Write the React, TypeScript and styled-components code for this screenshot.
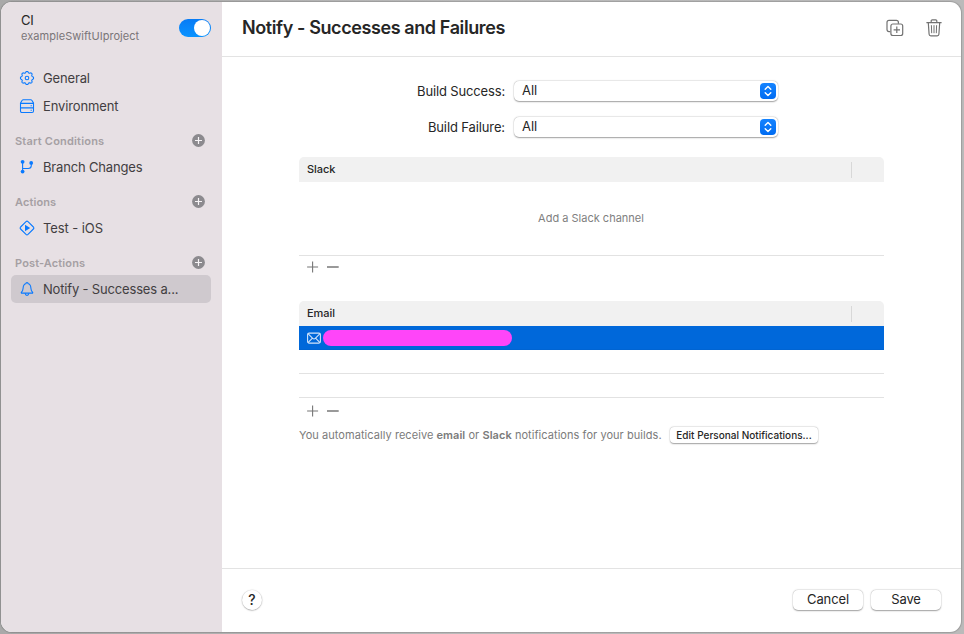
import React from "react";
import styled, { createGlobalStyle } from "styled-components";

const GlobalStyle = createGlobalStyle`
  * { box-sizing: border-box; }
  body {
    margin: 0;
    background: #b9b9b9;
    font-family: Inter, "Liberation Sans", sans-serif;
    font-size: 13px;
    color: #262626;
  }
  button { font-family: inherit; color: inherit; border: 0; padding: 0; background: none; }
  svg { display: block; flex: none; }
`;

const Desktop = styled.div`
  width: 964px;
  height: 634px;
  padding: 2px 3px 2px 1px;
  overflow: hidden;
  background: linear-gradient(90deg, #a9a9a9 0, #bdbdbd 50%, #bababa 100%);
`;
const Window = styled.div`
  display: flex;
  height: 630px;
  border-radius: 11px;
  overflow: hidden;
  background: #fff;
  box-shadow: 0 0 1px 1px rgba(0, 0, 0, 0.16);
`;

const Sidebar = styled.aside`
  width: 221px;
  flex: none;
  background: #e7e0e4;
`;
const Workflow = styled.div`
  display: flex;
  justify-content: space-between;
  height: 62px;
  padding: 10px 11px 0 20px;
`;
const WorkflowName = styled.div`
  font-size: 13px;
  line-height: 17px;
  letter-spacing: -0.2px;
`;
const ProjectName = styled.div`
  font-size: 11px;
  line-height: 15px;
  letter-spacing: 0.05px;
  color: #7a7578;
`;
const Toggle = styled.button`
  display: flex;
  justify-content: flex-end;
  width: 32px;
  height: 18px;
  margin-top: 7px;
  padding: 1px;
  border-radius: 9px;
  background: linear-gradient(#087bf5, #0a93ff);
`;
const Knob = styled.span`
  width: 16px;
  height: 16px;
  border-radius: 50%;
  background: #fff;
`;
const NavItem = styled.a<{ $selected?: boolean; $spacing: number }>`
  display: flex;
  align-items: center;
  gap: 8px;
  height: 28px;
  margin: 0 11px 0 10px;
  padding-left: 8px;
  border-radius: 5px;
  white-space: nowrap;
  color: #423e41;
  letter-spacing: ${(p) => p.$spacing}px;
  background: ${(p) => (p.$selected ? "#cfc9ce" : "transparent")};
`;
const SectionHeader = styled.div<{ $spacing: number }>`
  display: flex;
  align-items: center;
  justify-content: space-between;
  height: 33px;
  padding: 9px 17px 0 14px;
  font-size: 11px;
  font-weight: 600;
  letter-spacing: ${(p) => p.$spacing}px;
  color: #a59fa3;

  svg { margin-bottom: 2px; }
`;

const Main = styled.main`
  flex: 1;
  display: flex;
  flex-direction: column;
`;
const Header = styled.header`
  display: flex;
  align-items: center;
  height: 55px;
  padding: 0 18px 3px 20px;
  border-bottom: 1px solid #e3e3e3;
`;
const Title = styled.h1`
  flex: 1;
  margin: 0;
  font-size: 18px;
  line-height: 22px;
  font-weight: 600;
  letter-spacing: -0.4px;
`;
const HeaderActions = styled.div`
  display: flex;
  gap: 21px;
`;
const Content = styled.section`
  flex: 1;
  padding: 23px 0 0 77px;
`;
const Fields = styled.div`
  display: grid;
  row-gap: 14px;
  margin-bottom: 19px;
`;
const Field = styled.div`
  display: grid;
  grid-template-columns: 206px 264px;
  column-gap: 9px;
  align-items: center;
  height: 22px;
`;
const FieldLabel = styled.label<{ $spacing: number }>`
  text-align: right;
  letter-spacing: ${(p) => p.$spacing}px;
`;
const raised = `
  background: #fff;
  box-shadow: 0 0 0 0.5px rgba(0,0,0,.05), 0 0.5px 1.5px rgba(0,0,0,.36);
`;
const Select = styled.button`
  ${raised}
  display: flex;
  align-items: center;
  justify-content: space-between;
  height: 20px;
  padding: 0 2px 0 8px;
  border-radius: 5px;
  font-size: 13px;
`;
const SelectValue = styled.span`
  padding-bottom: 2px;
`;
const Stepper = styled.span`
  display: grid;
  place-items: center;
  width: 16px;
  height: 16px;
  border-radius: 4px;
  background: linear-gradient(#1483ff, #006cf2);
`;
const Table = styled.div<{ $gap: number }>`
  width: 585px;
  margin-bottom: ${(p) => p.$gap}px;
`;
const TableHead = styled.div`
  display: flex;
  align-items: center;
  justify-content: space-between;
  height: 25px;
  padding: 0 32px 2px 8px;
  border-radius: 5px 5px 0 0;
  background: #f1f1f1;
  font-size: 11px;
  font-weight: 500;
  letter-spacing: -0.04px;
`;
const ColumnRule = styled.span`
  width: 1px;
  height: 16px;
  margin-top: 3px;
  background: #d8d8d8;
`;
const EmptyState = styled.div`
  display: grid;
  place-items: center;
  height: 74px;
  padding: 0 1px 2px 0;
  border-bottom: 1px solid #e2e2e2;
  font-size: 11px;
  letter-spacing: 0;
  color: #808080;
`;
const TableRow = styled.div<{ $selected?: boolean }>`
  display: flex;
  align-items: center;
  gap: 2px;
  height: 24px;
  padding-left: 8px;
  border-bottom: 1px solid ${(p) => (p.$selected ? "#0064d2" : "#e2e2e2")};
  background: ${(p) => (p.$selected ? "#0068da" : "transparent")};
`;
const Redaction = styled.span`
  width: 189px;
  height: 16px;
  border-radius: 8px;
  background: #ff45f9;
`;
const TableTools = styled.div<{ $height: number }>`
  display: flex;
  align-items: center;
  gap: 8px;
  height: ${(p) => p.$height}px;
  padding: 0 0 1px 8px;
`;
const Notice = styled.div`
  display: flex;
  align-items: center;
  gap: 8px;
  height: 18px;
  font-size: 11px;
  color: #7b7b7b;
`;
const NoticeText = styled.span`
  width: 363px;
  white-space: nowrap;
  letter-spacing: 0.055px;

  b { font-weight: 600; }
`;
const SmallButton = styled.button`
  ${raised}
  width: 148px;
  height: 16px;
  border-radius: 4px;
  font-size: 10px;
  line-height: 15px;
  font-weight: 500;
  letter-spacing: 0.01px;
  white-space: nowrap;
  color: #262626;
`;
const Footer = styled.footer`
  display: flex;
  align-items: center;
  gap: 8px;
  height: 64px;
  padding: 0 20px 1px;
  border-top: 1px solid #e3e3e3;
`;
const HelpButton = styled.button`
  ${raised}
  width: 20px;
  height: 20px;
  margin-right: auto;
  border-radius: 50%;
  font-size: 14px;
  line-height: 20px;
  font-weight: 500;
`;
const PushButton = styled.button<{ $spacing: number }>`
  ${raised}
  width: 70px;
  height: 20px;
  padding-bottom: 1px;
  border-radius: 5px;
  font-size: 13px;
  line-height: 19px;
  letter-spacing: ${(p) => p.$spacing}px;
`;

const blue = { fill: "none", stroke: "#0a7aff", strokeWidth: 1.1 };

const toothRing = Array.from({ length: 97 }, (_, i) => {
  const a = (i / 96) * Math.PI * 2;
  const r = 5.95 + 0.6 * Math.tanh(2.5 * Math.cos(8 * a));
  return `${(8 + r * Math.sin(a)).toFixed(2)},${(8 - r * Math.cos(a)).toFixed(2)}`;
}).join(" ");

const GearIcon = () => (
  <svg width="16" height="16" viewBox="0 0 16 16" {...blue}>
    <polygon points={toothRing} strokeLinejoin="round" />
    <circle cx="8" cy="8" r="1.8" />
  </svg>
);
const DrivesIcon = () => (
  <svg width="16" height="16" viewBox="0 0 16 16" {...blue}>
    <path d="M1.5 5 3.2 2.3q.4-.6 1.1-.6h7.4q.7 0 1.1.6L14.5 5v8.1q0 1.4-1.4 1.4H2.9q-1.4 0-1.4-1.4zM1.5 5.4h13M1.5 9.9h13" />
    <path d="M11.6 7.7h1.2M11.6 12.2h1.2" />
  </svg>
);
const BranchIcon = () => (
  <svg width="16" height="16" viewBox="0 0 16 16" {...blue}>
    <path d="M3.6 3v10M3.6 9.5h5.7q3 0 3-3V4" />
    <g fill="#0a7aff" stroke="none">
      <circle cx="3.6" cy="2.8" r="1.9" />
      <circle cx="3.6" cy="12.6" r="1.9" />
      <circle cx="12.2" cy="3.9" r="1.9" />
    </g>
  </svg>
);
const TestIcon = () => (
  <svg width="16" height="16" viewBox="0 0 16 16" {...blue}>
    <path d="M7 1.6q1-.9 2 0L14.4 7q.9 1 0 2L9 14.4q-1 .9-2 0L1.6 9q-.9-1 0-2z" />
    <path d="M6 4.8v6.4l5.2-3.2z" fill="#0a7aff" stroke="none" />
  </svg>
);
const BellIcon = () => (
  <svg width="16" height="16" viewBox="0 0 16 16" {...blue} strokeLinejoin="round">
    <path d="M2.4 12.1q-.4-.5.1-1 1.4-1.4 1.5-3.4.2-3 1.2-4 .7-.8 1.5-.9.2-1.2 1.3-1.2t1.3 1.2q.8.1 1.5.9 1 1 1.2 4 .1 2 1.5 3.4.5.5.1 1z" />
    <path d="M6.2 12.4q.2 2 1.8 2t1.8-2" />
  </svg>
);
const AddIcon = () => (
  <svg width="13" height="13" viewBox="0 0 13 13">
    <circle cx="6.5" cy="6.5" r="6.4" fill="#8c8a8e" />
    <path d="M6.5 3v7M3 6.5h7" stroke="#f7f4f6" strokeWidth="1.2" />
  </svg>
);
const DuplicateIcon = () => (
  <svg width="18" height="18" viewBox="0 0 18 18" fill="none" stroke="#727272" strokeWidth="1.2">
    <path d="M4.3 12.6H3q-2 0-2-2V3.4q0-2 2-2h7.4q2 0 2 2v1.3" />
    <rect x="4.9" y="5" width="11.8" height="11.5" rx="2" />
    <path d="M10.8 7.6v6.4M7.6 10.8H14" />
  </svg>
);
const TrashIcon = () => (
  <svg width="18" height="18" viewBox="0 0 18 18" fill="none" stroke="#727272" strokeWidth="1.2">
    <path d="M1.4 3.7h15.2M6.2 3.5V1.8q0-1 1-1h3.6q1 0 1 1v1.7M3.3 3.8l.8 11.5q.1 1.6 1.7 1.6h6.4q1.6 0 1.7-1.6l.8-11.5" />
    <path d="M6.4 6.2l.3 8M9 6.2v8M11.6 6.2l-.3 8" strokeWidth="1" />
  </svg>
);
const ChevronsIcon = () => (
  <svg width="16" height="16" viewBox="0 0 16 16" fill="none" stroke="#fff" strokeWidth="1.4" strokeLinecap="round" strokeLinejoin="round">
    <path d="M5.2 6.3 8 3.5l2.8 2.8M5.2 9.8 8 12.6l2.8-2.8" />
  </svg>
);
const MailIcon = () => (
  <svg width="14" height="12" viewBox="0 0 14 12" fill="none" stroke="#d2e4fa" strokeWidth="1.1">
    <rect x="0.6" y="1.1" width="12.8" height="10" rx="1.5" />
    <path d="M1 1.7l4.7 4.6q1.3 1.1 2.6 0L13 1.7M1 10.7l4.2-4.4M13 10.7 8.8 6.3" />
  </svg>
);
const PlusIcon = () => (
  <svg width="12" height="12" viewBox="0 0 12 12" stroke="#777" strokeWidth="1.1">
    <path d="M5.6.6v10.8M.1 6h11" />
  </svg>
);
const MinusIcon = () => (
  <svg width="12" height="12" viewBox="0 0 12 12" stroke="#777" strokeWidth="1.5">
    <path d="M0 6h11.7" />
  </svg>
);

const Tools = ({ height }: { height: number }) => (
  <TableTools $height={height}>
    <PlusIcon />
    <MinusIcon />
  </TableTools>
);

const ChoiceField = ({ label, spacing }: { label: string; spacing: number }) => (
  <Field>
    <FieldLabel $spacing={spacing}>{label}</FieldLabel>
    <Select>
      <SelectValue>All</SelectValue>
      <Stepper>
        <ChevronsIcon />
      </Stepper>
    </Select>
  </Field>
);

export default function App() {
  return (
    <Desktop>
      <GlobalStyle />
      <Window>
        <Sidebar>
          <Workflow>
            <div>
              <WorkflowName>CI</WorkflowName>
              <ProjectName>exampleSwiftUIproject</ProjectName>
            </div>
            <Toggle aria-label="Enabled">
              <Knob />
            </Toggle>
          </Workflow>
          <NavItem $spacing={-0.15}><GearIcon />General</NavItem>
          <NavItem $spacing={-0.12}><DrivesIcon />Environment</NavItem>
          <SectionHeader $spacing={0.2}>Start Conditions<AddIcon /></SectionHeader>
          <NavItem $spacing={-0.17}><BranchIcon />Branch Changes</NavItem>
          <SectionHeader $spacing={0.1}>Actions<AddIcon /></SectionHeader>
          <NavItem $spacing={-0.08}><TestIcon />Test - iOS</NavItem>
          <SectionHeader $spacing={0.13}>Post-Actions<AddIcon /></SectionHeader>
          <NavItem $selected $spacing={-0.17}><BellIcon />Notify - Successes a...</NavItem>
        </Sidebar>
        <Main>
          <Header>
            <Title>Notify - Successes and Failures</Title>
            <HeaderActions>
              <DuplicateIcon />
              <TrashIcon />
            </HeaderActions>
          </Header>
          <Content>
            <Fields>
              <ChoiceField label="Build Success:" spacing={-0.15} />
              <ChoiceField label="Build Failure:" spacing={-0.12} />
            </Fields>
            <Table $gap={22}>
              <TableHead>Slack<ColumnRule /></TableHead>
              <EmptyState>Add a Slack channel</EmptyState>
              <Tools height={23} />
            </Table>
            <Table $gap={1}>
              <TableHead>Email<ColumnRule /></TableHead>
              <TableRow $selected>
                <MailIcon />
                <Redaction />
              </TableRow>
              <TableRow />
              <TableRow />
              <Tools height={27} />
            </Table>
            <Notice>
              <NoticeText>
                You automatically receive <b>email</b> or <b>Slack</b> notifications for your builds.
              </NoticeText>
              <SmallButton>Edit Personal Notifications...</SmallButton>
            </Notice>
          </Content>
          <Footer>
            <HelpButton>?</HelpButton>
            <PushButton $spacing={-0.1}>Cancel</PushButton>
            <PushButton $spacing={-0.1}>Save</PushButton>
          </Footer>
        </Main>
      </Window>
    </Desktop>
  );
}
